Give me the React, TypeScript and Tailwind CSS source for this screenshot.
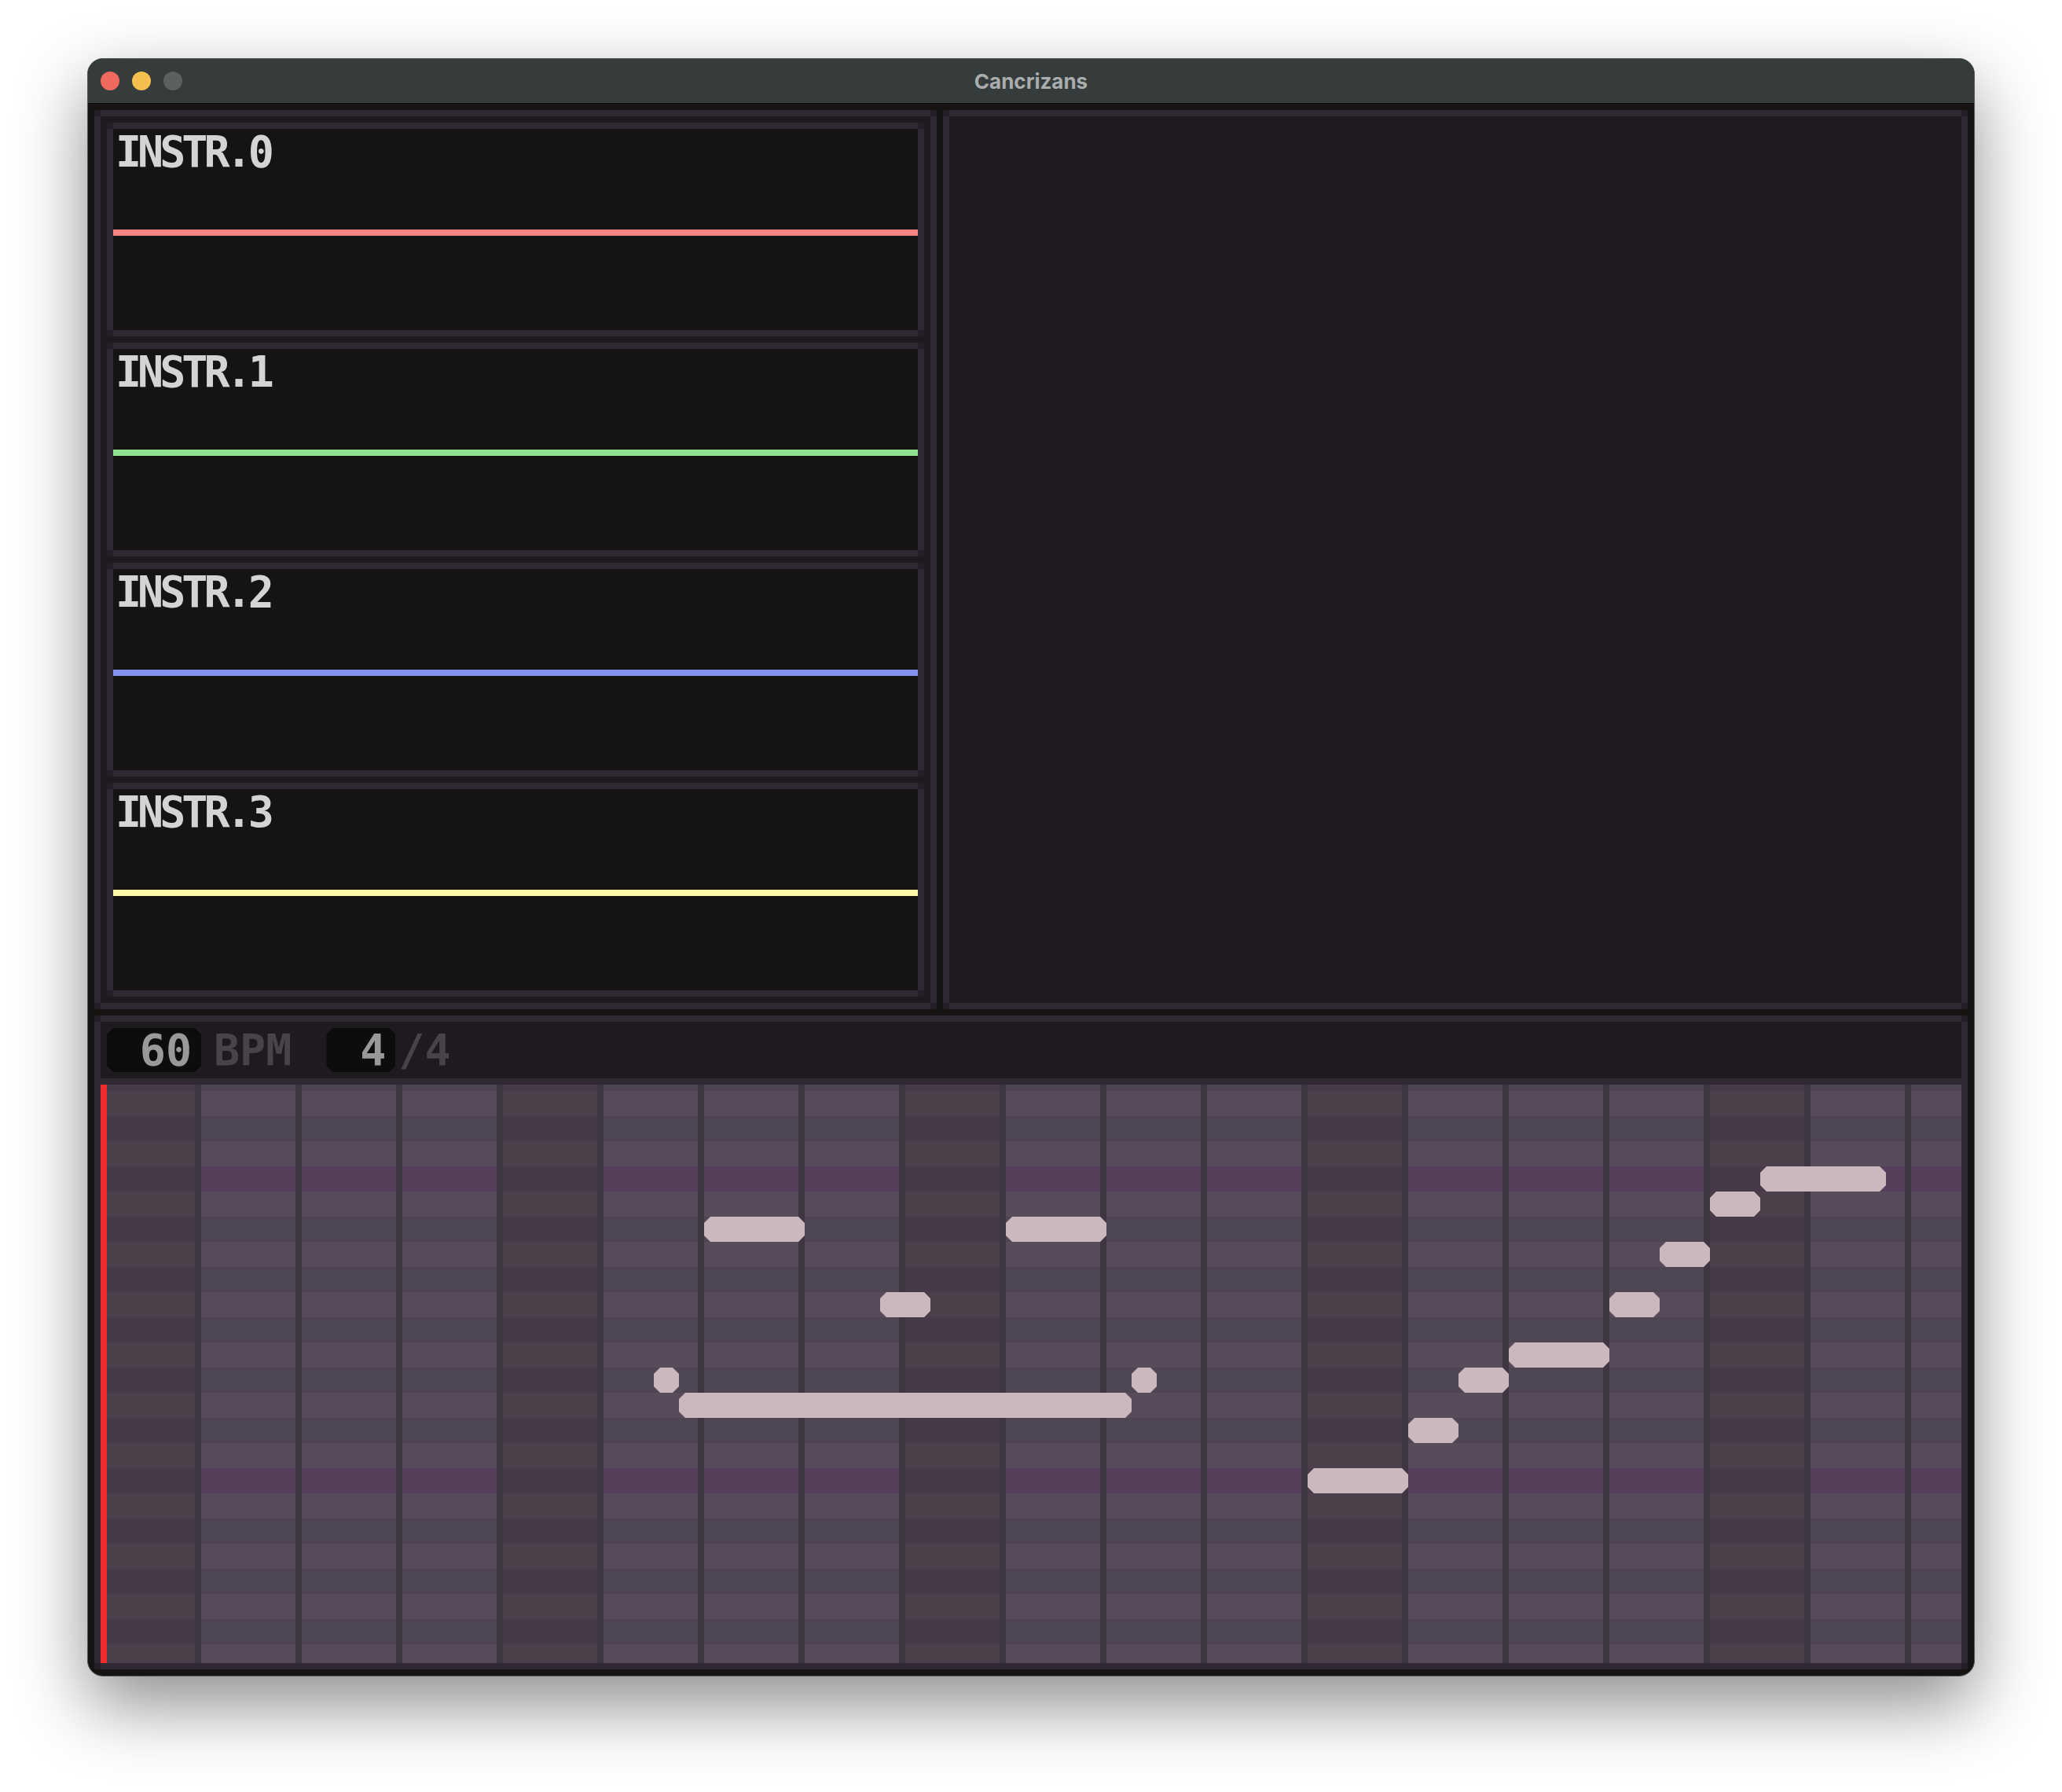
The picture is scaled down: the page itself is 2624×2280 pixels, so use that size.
import React from "react";

const INSTRUMENTS = [
  { name: "INSTR.0", line: "bg-[#fb8484]" },
  { name: "INSTR.1", line: "bg-[#90e090]" },
  { name: "INSTR.2", line: "bg-[#8494f0]" },
  { name: "INSTR.3", line: "bg-[#fff8a8]" },
];

// piano roll notes: x offset from grid left, row index, width (px)
const NOTES = [
  { x: 768, row: 5, w: 128 },
  { x: 1152, row: 5, w: 128 },
  { x: 992, row: 8, w: 64 },
  { x: 704, row: 11, w: 32 },
  { x: 736, row: 12, w: 576 },
  { x: 1312, row: 11, w: 32 },
  { x: 1536, row: 15, w: 128 },
  { x: 1664, row: 13, w: 64 },
  { x: 1728, row: 11, w: 64 },
  { x: 1792, row: 10, w: 128 },
  { x: 1920, row: 8, w: 64 },
  { x: 1984, row: 6, w: 64 },
  { x: 2048, row: 4, w: 64 },
  { x: 2112, row: 3, w: 160 },
];

const COLS = Array.from({ length: 19 }, (_, c) => c);
const ROWS = Array.from({ length: 24 }, (_, i) => i - 1);

const pixelFont = "font-['DejaVu_Sans_Mono',monospace] font-bold text-[55px] leading-none";
const cut =
  "[clip-path:polygon(8px_0,calc(100%-8px)_0,100%_8px,100%_calc(100%-8px),calc(100%-8px)_100%,8px_100%,0_calc(100%-8px),0_8px)]";

const cellClass = (c: number, r: number) => {
  const odd = Math.abs(r) % 2 === 1;
  if (c % 4 === 0) return odd ? "bg-[#463a48]" : "bg-[#4b3f4a]";
  if (r === 3 || r === 15) return "bg-[#553f59]";
  return odd ? "bg-[#4e4654]" : "bg-[#564b5a]";
};

const Frame = ({ className = "", children }: { className?: string; children?: React.ReactNode }) => (
  <div className={`relative border-8 border-[#302833] ${className}`}>
    {children}
    <span className="absolute -left-2 -top-2 size-2 bg-[#241f27]" />
    <span className="absolute -right-2 -top-2 size-2 bg-[#241f27]" />
    <span className="absolute -left-2 -bottom-2 size-2 bg-[#241f27]" />
    <span className="absolute -right-2 -bottom-2 size-2 bg-[#241f27]" />
  </div>
);

const PianoRoll = () => (
  <div className="relative h-[736px] overflow-hidden bg-[#4e4654]">
    <div className="flex -mt-[24px]">
      {COLS.map((c) => (
        <div key={c} className="flex-none w-[128px] flex flex-col border-r-8 border-[#3e3742]">
          {ROWS.map((r) => (
            <div key={r} className={`h-[32px] ${cellClass(c, r)}`} />
          ))}
        </div>
      ))}
    </div>
    {NOTES.map((n, i) => (
      <div
        key={i}
        className={`absolute h-[32px] bg-[#cbb8be] ${cut}`}
        style={{ left: n.x, top: 8 + n.row * 32, width: n.w }}
      />
    ))}
    {/* playhead */}
    <div className="absolute left-0 top-0 bottom-0 w-2 bg-[#f02c2f]" />
  </div>
);

export default function App() {
  return (
    <div className="min-h-[2280px] w-[2624px] bg-white pt-[74px] pl-[111px]">
      <div className="w-[2402px] rounded-[20px] overflow-hidden border border-[#55595a] shadow-[0_36px_90px_rgba(0,0,0,0.45)] bg-[#151412]">
        {/* title bar */}
        <div className="h-[57px] border-b border-[#0b0b0b] bg-[#363b3b] grid grid-cols-[1fr_auto_1fr] items-center">
          <div className="flex items-center gap-4 pl-4">
            <span className="size-6 rounded-full bg-[#ee6a5f]" />
            <span className="size-6 rounded-full bg-[#f5bf4f]" />
            <span className="size-6 rounded-full bg-[#5b6060]" />
          </div>
          <div className="font-['Inter','Open_Sans',sans-serif] font-bold text-[26px] text-[#a9adad]">
            Cancrizans
          </div>
          <div />
        </div>

        {/* content */}
        <div className="h-[2000px] p-2 flex flex-col gap-2">
          <div className="h-[1144px] flex gap-2">
            <Frame className="w-[1072px] bg-[#1e1a1f] p-2 flex flex-col gap-2">
              {INSTRUMENTS.map((ins) => (
                <Frame key={ins.name} className="bg-[#151412]">
                  <div className="h-[256px] flex flex-col">
                    <div className={`h-[128px] pl-[3px] pt-[2px] text-[#d4d4d4] tracking-[-5px] ${pixelFont}`}>
                      {ins.name}
                    </div>
                    <div className={`h-2 ${ins.line}`} />
                  </div>
                </Frame>
              ))}
            </Frame>
            <Frame className="flex-1 bg-[#1e1a1f]" />
          </div>

          <Frame className="flex-1 bg-[#1e1a1f] flex flex-col">
            <div className="h-[72px] flex items-center pl-2">
              <div className={`w-[120px] h-[56px] bg-[#0d0d0d] flex items-center justify-end pr-3 text-[#999999] ${cut} ${pixelFont}`}>
                60
              </div>
              <div className={`ml-4 text-[#48424a] ${pixelFont}`}>BPM</div>
              <div className={`ml-[44px] w-[88px] h-[56px] bg-[#0d0d0d] flex items-center justify-end pr-3 text-[#999999] ${cut} ${pixelFont}`}>
                4
              </div>
              <div className={`ml-1 text-[#48424a] ${pixelFont}`}>/4</div>
            </div>
            <div className="h-2 bg-[#302833]" />
            <PianoRoll />
          </Frame>
        </div>
      </div>
    </div>
  );
}
